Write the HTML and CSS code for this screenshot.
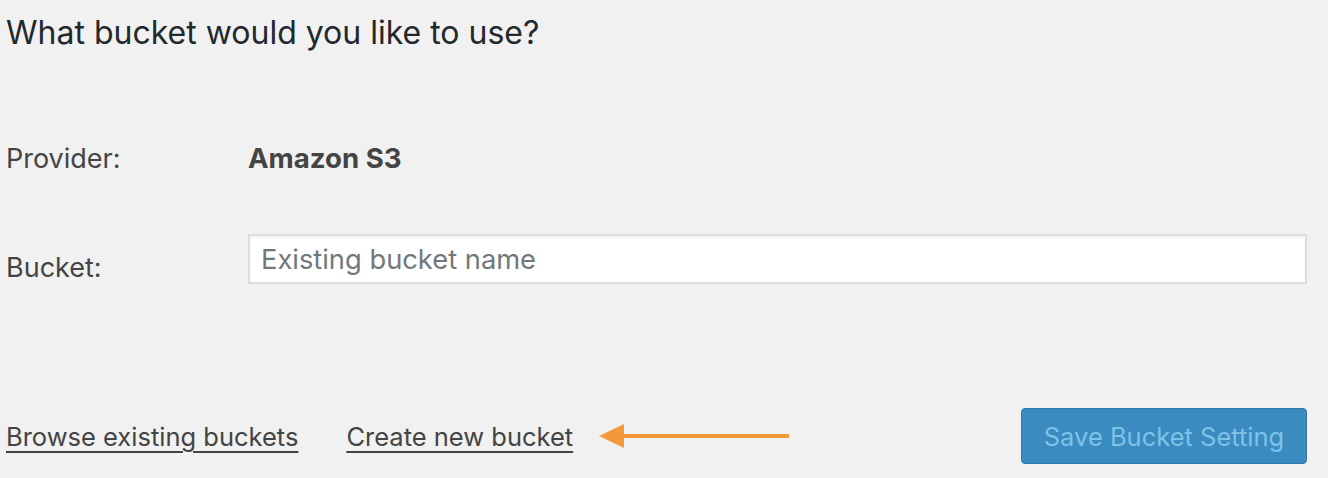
FILE: index.html
```html
<!DOCTYPE html>
<html>
<head>
<meta charset="utf-8">
<link rel="stylesheet" href="styles.css">
</head>
<body>
<div class="page">
  <h2 class="title">What bucket would you like to use?</h2>
  <div class="row row-provider">
    <div class="label">Provider:</div>
    <div class="value">Amazon S3</div>
  </div>
  <div class="row row-bucket">
    <div class="label">Bucket:</div>
    <input class="bucket-input" type="text" placeholder="Existing bucket name">
  </div>
  <div class="actions">
    <a class="link" href="#">Browse existing buckets</a>
    <a class="link link-create" href="#">Create new bucket</a>
    <svg class="arrow" width="192" height="26" viewBox="0 0 192 26">
      <polygon points="0,13 25,1 25,25" fill="#f39a38"/>
      <rect x="22" y="11" width="168" height="4" fill="#f39a38"/>
    </svg>
    <button class="save-btn" type="button">Save Bucket Setting</button>
  </div>
</div>
</body>
</html>
```

FILE: styles.css
```css
html, body {
  margin: 0;
  padding: 0;
  background: #f1f1f1;
}
body {
  font-family: Inter, "Liberation Sans", sans-serif;
  color: #444;
}
.page {
  width: 1328px;
  height: 478px;
  box-sizing: border-box;
  padding: 0 21px 0 6px;
  display: flex;
  flex-direction: column;
}
.title {
  margin: 14px 0 0 0;
  font-size: 32px;
  font-weight: 400;
  line-height: 38px;
  color: #23282d;
}
.row {
  display: flex;
  align-items: center;
}
.row-provider {
  margin-top: 89px;
  height: 34px;
}
.row-bucket {
  margin-top: 59px;
  height: 50px;
}
.label {
  width: 242px;
  font-size: 27px;
  color: #444;
  flex-shrink: 0;
}
.row-bucket .label {
  align-self: flex-end;
  line-height: 34px;
  margin-bottom: -1px;
}
.value {
  font-size: 27.6px;
  font-weight: 700;
  color: #444;
}
.bucket-input {
  flex: 1;
  height: 50px;
  box-sizing: border-box;
  border: 2px solid #ddd;
  box-shadow: inset 0 2px 3px rgba(0,0,0,0.05);
  background: #fff;
  padding: 0 11px;
  font-family: Inter, "Liberation Sans", sans-serif;
  font-size: 27.3px;
  color: #32373c;
  outline: none;
}
.bucket-input::placeholder {
  color: #72777c;
}
.actions {
  margin-top: 124px;
  display: flex;
  align-items: center;
  height: 56px;
}
.link {
  font-size: 25.5px;
  color: #444;
  text-decoration: underline;
  text-underline-offset: 5px;
  text-decoration-thickness: 2px;
}
.link-create {
  margin-left: 48px;
}
.arrow {
  margin-left: 26px;
  display: block;
}
.save-btn {
  margin-left: auto;
  width: 286px;
  height: 56px;
  background: #3a8bbf;
  border: 1px solid #2e78aa;
  border-radius: 4px;
  color: #7ec2e8;
  font-family: Inter, "Liberation Sans", sans-serif;
  font-size: 25.5px;
  padding: 0;
}
```
